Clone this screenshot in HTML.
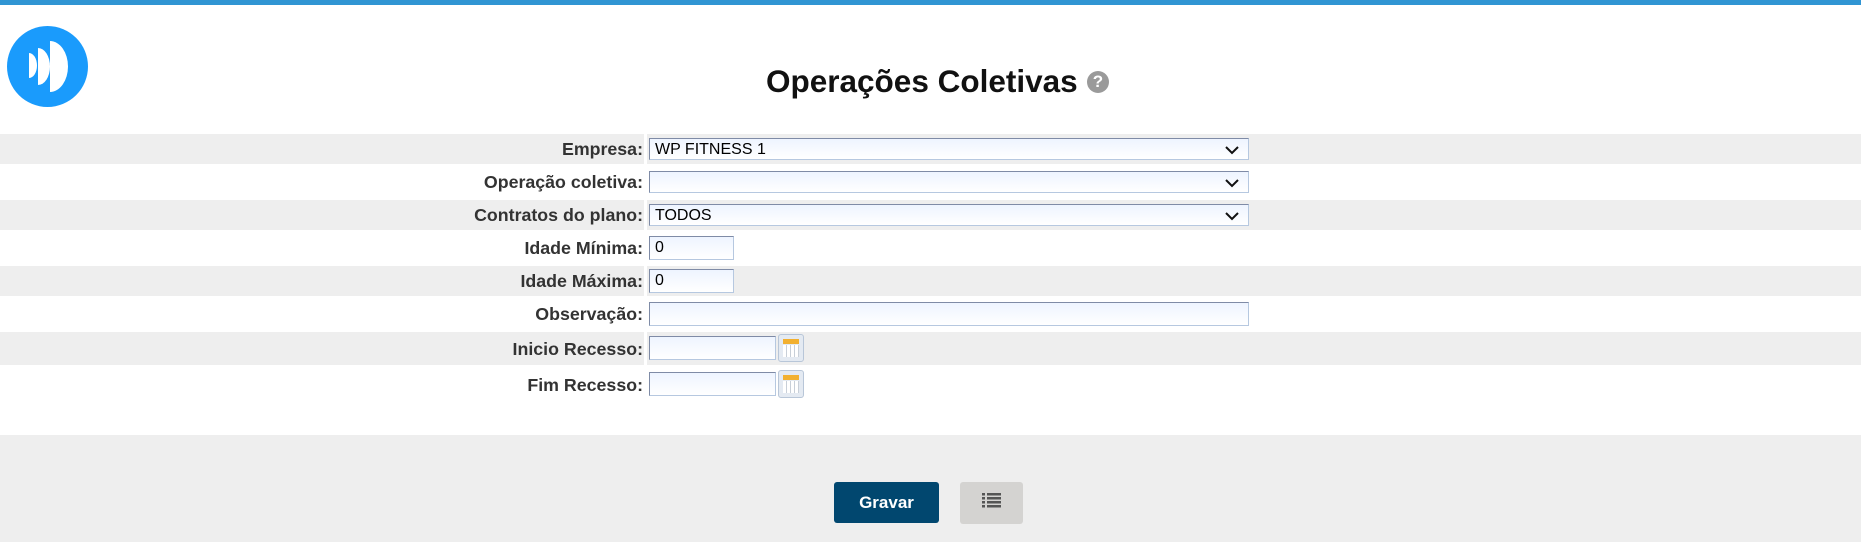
<!DOCTYPE html>
<html><head><meta charset="utf-8"><style>
*{box-sizing:border-box;margin:0;padding:0}
body{width:1861px;height:542px;background:#fff;font-family:"Liberation Sans",Arial,sans-serif;position:relative;overflow:hidden}
.top{position:absolute;left:0;top:0;width:1861px;height:5px;background:#3095d3}
.title{position:absolute;left:766px;top:63px;font-size:31.5px;font-weight:bold;color:#111;white-space:nowrap}
.help{position:absolute;left:1087px;top:71px;width:22px;height:22px;border-radius:50%;background:#9a9a9a;color:#fff;font-size:17px;font-weight:bold;text-align:center;line-height:22px}
.row{position:absolute;left:0;width:1861px}
.g{background:#eee}
.lab{position:absolute;right:1218px;font-size:17.8px;font-weight:bold;color:#333;white-space:nowrap}
.gap{position:absolute;left:644px;top:0;bottom:0;width:3px;background:#fff}
.inp{position:absolute;left:649px;height:24px;border:1px solid #b6c8e0;border-top-color:#7f8ba6;border-left-color:#7f8ba6;background:linear-gradient(#eef4ff,#fff);font-size:16px;color:#000;padding-left:5px;line-height:22px}
.sel{width:600px}
.sel svg{position:absolute;right:9px;top:7px}
.cal{position:absolute;left:778px;width:26px;height:28px;border:1px solid #b8c6d8;border-radius:3px;background:#e4eaf2}
.cal:before{content:"";position:absolute;left:4px;top:4px;width:16px;height:5px;background:#f2b030}
.cal:after{content:"";position:absolute;left:4px;top:10px;width:16px;height:12px;background:repeating-linear-gradient(90deg,#fff 0 3px,#c8cfd8 3px 4px)}
.foot{position:absolute;left:0;top:435px;width:1861px;height:107px;background:#eee}
.b1{position:absolute;left:834px;top:482px;width:105px;height:41px;background:#01476f;border-radius:3px;color:#fff;font-weight:bold;font-size:17px;text-align:center;line-height:41px}
.b2{position:absolute;left:960px;top:482px;width:63px;height:42px;background:#d4d3d1;border-radius:3px}
</style></head><body>
<div class="top"></div>
<svg style="position:absolute;left:7px;top:26px" width="81" height="81" viewBox="0 0 81 81">
<circle cx="40.5" cy="40.5" r="40.5" fill="#1a9bfc"/>
<path d="M22 27 A8 12.5 0 0 1 22 52 Z" fill="#fff"/>
<path d="M31 22 A12 18.5 0 0 1 31 59 Z" fill="#fff"/>
<path d="M43 15 A18 25.5 0 0 1 43 66 Z" fill="#fff"/>
</svg>
<div class="title">Operações Coletivas</div>
<div class="help">?</div>

<div class="row g" style="top:134px;height:30px"><div class="gap"></div><div class="lab" style="top:5px">Empresa:</div><div class="inp sel" style="top:4px;height:22px">WP FITNESS 1<svg width="14" height="9"><path d="M1 1l6 6 6-6" stroke="#111" stroke-width="2" fill="none"/></svg></div></div>
<div class="row" style="top:164px;height:36px"><div class="lab" style="top:8px">Operação coletiva:</div><div class="inp sel" style="top:7px;height:22px"><svg width="14" height="9"><path d="M1 1l6 6 6-6" stroke="#111" stroke-width="2" fill="none"/></svg></div></div>
<div class="row g" style="top:200px;height:30px"><div class="gap"></div><div class="lab" style="top:5px">Contratos do plano:</div><div class="inp sel" style="top:4px;height:22px">TODOS<svg width="14" height="9"><path d="M1 1l6 6 6-6" stroke="#111" stroke-width="2" fill="none"/></svg></div></div>
<div class="row" style="top:230px;height:36px"><div class="lab" style="top:8px">Idade Mínima:</div><div class="inp" style="top:6px;width:85px">0</div></div>
<div class="row g" style="top:266px;height:30px"><div class="gap"></div><div class="lab" style="top:5px">Idade Máxima:</div><div class="inp" style="top:3px;width:85px">0</div></div>
<div class="row" style="top:296px;height:36px"><div class="lab" style="top:8px">Observação:</div><div class="inp" style="top:6px;width:600px"></div></div>
<div class="row g" style="top:332px;height:33px"><div class="gap"></div><div class="lab" style="top:7px">Inicio Recesso:</div><div class="inp" style="top:4px;width:127px"></div><div class="cal" style="top:2px"></div></div>
<div class="row" style="top:365px;height:40px"><div class="lab" style="top:10px">Fim Recesso:</div><div class="inp" style="top:7px;width:127px"></div><div class="cal" style="top:5px"></div></div>

<div class="foot"></div>
<div class="b1">Gravar</div>
<div class="b2"><svg style="position:absolute;left:22px;top:11px" width="19" height="15" viewBox="0 0 19 15"><g fill="#555"><rect x="0" y="0" width="3" height="2.5"/><rect x="5" y="0" width="14" height="2.5"/><rect x="0" y="4" width="3" height="2.5"/><rect x="5" y="4" width="14" height="2.5"/><rect x="0" y="8" width="3" height="2.5"/><rect x="5" y="8" width="14" height="2.5"/><rect x="0" y="12" width="3" height="2.5"/><rect x="5" y="12" width="14" height="2.5"/></g></svg></div>
</body></html>
